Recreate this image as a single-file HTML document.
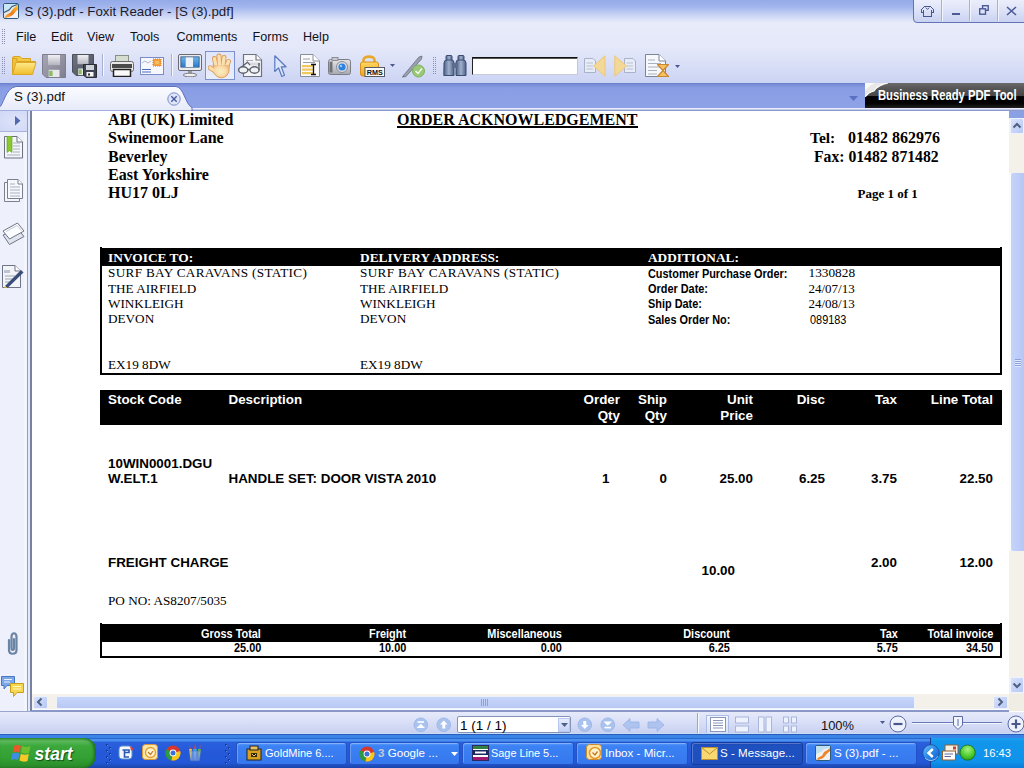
<!DOCTYPE html>
<html><head><meta charset="utf-8">
<style>
*{margin:0;padding:0;box-sizing:border-box}
html,body{width:1024px;height:768px;overflow:hidden;background:#fff}
body{position:relative;font-family:"Liberation Sans",sans-serif}
svg{display:block}
</style></head><body>
<div style="position:absolute;left:0px;top:0px;width:1024px;height:23px;background:linear-gradient(#93aae9 0px,#a2b6ed 7px,#c4d0f4 14px,#e2e7f9 21px,#e8ebfa 23px)"></div>
<div style="position:absolute;left:0px;top:23px;width:1024px;height:25px;background:linear-gradient(#e8ebfa,#e4e8f9)"></div>
<div style="position:absolute;left:0px;top:48px;width:1024px;height:35px;background:linear-gradient(#e4e8f9,#ccd4f4)"></div>
<div style="position:absolute;left:0px;top:83px;width:1024px;height:25px;background:linear-gradient(#6a7fcc 0px,#7b90d8 2px,#889de3 5px,#8ea3e7 25px)"></div>
<div style="position:absolute;left:0px;top:108px;width:1024px;height:3px;background:linear-gradient(#e9ecfa 0px,#e9ecfa 1px,#c3cbea 1px,#c3cbea 2px,#8d9ad0 2px)"></div>
<svg style="position:absolute;left:3px;top:3px;" width="16" height="16" viewBox="0 0 16 16"><defs><linearGradient id="fxo" x1="0" y1="1" x2="1" y2="0"><stop offset="0" stop-color="#f6b04a"/><stop offset="0.45" stop-color="#ee7a1a"/><stop offset="1" stop-color="#ffc830"/></linearGradient></defs>
<rect x="0.5" y="0.5" width="15" height="15" rx="1.5" fill="#e4e6e8" stroke="#2f5a7a"/>
<path d="M1 1 H14 L9 3.5 L6 7 L1 9.5 Z" fill="#c8e6f4"/>
<path d="M1 9.5 L6 7 L9 3.5 L14.5 1.5" fill="none" stroke="#2f5a7a" stroke-width="1.1"/>
<path d="M1.5 15 C2.5 11.5 5.5 11 7.5 9.5 C9 8 10 5 15 2 V6.5 C12.5 8 11.5 10.5 10 12 C8.5 13.5 6 14.5 3.5 15 Z" fill="url(#fxo)"/>
<path d="M3 15 C5 14 8 13.5 10 12 C11.5 10.5 13 8.5 15 7 V15 Z" fill="#f2f2f2"/></svg>
<div style="position:absolute;top:5.00px;font-family:'Liberation Sans',sans-serif;font-weight:normal;font-size:13.3px;line-height:13.3px;color:#1b1b2a;white-space:nowrap;left:24.5px;">S (3).pdf - Foxit Reader - [S (3).pdf]</div>
<div style="position:absolute;left:913px;top:-2px;width:113px;height:25px;border:1px solid #6474b4;border-radius:0 0 0 4px;background:linear-gradient(#eceffb 0px,#dfe4f8 10px,#c9d2f2 23px)"></div>
<div style="position:absolute;left:941px;top:0px;width:1px;height:21px;background:#a8b2d8"></div>
<div style="position:absolute;left:942px;top:0px;width:1px;height:21px;background:#f2f4fc"></div>
<div style="position:absolute;left:969px;top:0px;width:1px;height:21px;background:#a8b2d8"></div>
<div style="position:absolute;left:970px;top:0px;width:1px;height:21px;background:#f2f4fc"></div>
<div style="position:absolute;left:997px;top:0px;width:1px;height:21px;background:#a8b2d8"></div>
<div style="position:absolute;left:998px;top:0px;width:1px;height:21px;background:#f2f4fc"></div>
<svg style="position:absolute;left:920px;top:5px;" width="16" height="13" viewBox="0 0 16 13"><g fill="none" stroke="#4a5690" stroke-width="1.1" shape-rendering="crispEdges"><path d="M4.5 1.5 H10.5 L13.5 4.5 V7.5 H11.5 V11.5 H3.5 V7.5 H1.5 V4.5 Z"/><path d="M3.5 4.5 V7.5 M11.5 4.5 V7.5"/></g><path d="M5.8 2.6 L7.5 4.4 L9.2 2.6" fill="none" stroke="#4a5690" stroke-width="1"/></svg>
<div style="position:absolute;left:952px;top:13px;width:8px;height:2px;background:#4c5a96"></div>
<svg style="position:absolute;left:979px;top:5px;" width="10" height="10" viewBox="0 0 10 10"><rect x="3.6" y="0.7" width="5.6" height="4.6" fill="none" stroke="#4c5a96" stroke-width="1.4"/><rect x="0.7" y="3.8" width="5.8" height="5.4" fill="#dde2f7" stroke="#4c5a96" stroke-width="1.4"/></svg>
<svg style="position:absolute;left:1006px;top:6px;" width="11" height="10" viewBox="0 0 11 10"><path d="M1 1 L10 9 M10 1 L1 9" stroke="#4c5a96" stroke-width="1.6"/></svg>
<div style="position:absolute;left:2px;top:29px;width:1px;height:1px;background:#8c90b0"></div>
<div style="position:absolute;left:4px;top:29px;width:1px;height:1px;background:#8c90b0"></div>
<div style="position:absolute;left:2px;top:31px;width:1px;height:1px;background:#8c90b0"></div>
<div style="position:absolute;left:4px;top:31px;width:1px;height:1px;background:#8c90b0"></div>
<div style="position:absolute;left:2px;top:33px;width:1px;height:1px;background:#8c90b0"></div>
<div style="position:absolute;left:4px;top:33px;width:1px;height:1px;background:#8c90b0"></div>
<div style="position:absolute;left:2px;top:35px;width:1px;height:1px;background:#8c90b0"></div>
<div style="position:absolute;left:4px;top:35px;width:1px;height:1px;background:#8c90b0"></div>
<div style="position:absolute;left:2px;top:37px;width:1px;height:1px;background:#8c90b0"></div>
<div style="position:absolute;left:4px;top:37px;width:1px;height:1px;background:#8c90b0"></div>
<div style="position:absolute;left:2px;top:39px;width:1px;height:1px;background:#8c90b0"></div>
<div style="position:absolute;left:4px;top:39px;width:1px;height:1px;background:#8c90b0"></div>
<div style="position:absolute;left:2px;top:41px;width:1px;height:1px;background:#8c90b0"></div>
<div style="position:absolute;left:4px;top:41px;width:1px;height:1px;background:#8c90b0"></div>
<div style="position:absolute;left:2px;top:43px;width:1px;height:1px;background:#8c90b0"></div>
<div style="position:absolute;left:4px;top:43px;width:1px;height:1px;background:#8c90b0"></div>
<div style="position:absolute;top:31.00px;font-family:'Liberation Sans',sans-serif;font-weight:normal;font-size:12.6px;line-height:12.6px;color:#101018;white-space:nowrap;left:16px;">File</div>
<div style="position:absolute;top:31.00px;font-family:'Liberation Sans',sans-serif;font-weight:normal;font-size:12.6px;line-height:12.6px;color:#101018;white-space:nowrap;left:51px;">Edit</div>
<div style="position:absolute;top:31.00px;font-family:'Liberation Sans',sans-serif;font-weight:normal;font-size:12.6px;line-height:12.6px;color:#101018;white-space:nowrap;left:87px;">View</div>
<div style="position:absolute;top:31.00px;font-family:'Liberation Sans',sans-serif;font-weight:normal;font-size:12.6px;line-height:12.6px;color:#101018;white-space:nowrap;left:130px;">Tools</div>
<div style="position:absolute;top:31.00px;font-family:'Liberation Sans',sans-serif;font-weight:normal;font-size:12.6px;line-height:12.6px;color:#101018;white-space:nowrap;left:176.5px;">Comments</div>
<div style="position:absolute;top:31.00px;font-family:'Liberation Sans',sans-serif;font-weight:normal;font-size:12.6px;line-height:12.6px;color:#101018;white-space:nowrap;left:252.5px;">Forms</div>
<div style="position:absolute;top:31.00px;font-family:'Liberation Sans',sans-serif;font-weight:normal;font-size:12.6px;line-height:12.6px;color:#101018;white-space:nowrap;left:303px;">Help</div>
<div style="position:absolute;left:2px;top:57px;width:1px;height:1px;background:#8c90b0"></div>
<div style="position:absolute;left:4px;top:57px;width:1px;height:1px;background:#8c90b0"></div>
<div style="position:absolute;left:2px;top:59px;width:1px;height:1px;background:#8c90b0"></div>
<div style="position:absolute;left:4px;top:59px;width:1px;height:1px;background:#8c90b0"></div>
<div style="position:absolute;left:2px;top:61px;width:1px;height:1px;background:#8c90b0"></div>
<div style="position:absolute;left:4px;top:61px;width:1px;height:1px;background:#8c90b0"></div>
<div style="position:absolute;left:2px;top:63px;width:1px;height:1px;background:#8c90b0"></div>
<div style="position:absolute;left:4px;top:63px;width:1px;height:1px;background:#8c90b0"></div>
<div style="position:absolute;left:2px;top:65px;width:1px;height:1px;background:#8c90b0"></div>
<div style="position:absolute;left:4px;top:65px;width:1px;height:1px;background:#8c90b0"></div>
<div style="position:absolute;left:2px;top:67px;width:1px;height:1px;background:#8c90b0"></div>
<div style="position:absolute;left:4px;top:67px;width:1px;height:1px;background:#8c90b0"></div>
<div style="position:absolute;left:2px;top:69px;width:1px;height:1px;background:#8c90b0"></div>
<div style="position:absolute;left:4px;top:69px;width:1px;height:1px;background:#8c90b0"></div>
<div style="position:absolute;left:2px;top:71px;width:1px;height:1px;background:#8c90b0"></div>
<div style="position:absolute;left:4px;top:71px;width:1px;height:1px;background:#8c90b0"></div>
<div style="position:absolute;left:2px;top:73px;width:1px;height:1px;background:#8c90b0"></div>
<div style="position:absolute;left:4px;top:73px;width:1px;height:1px;background:#8c90b0"></div>
<svg style="position:absolute;left:12px;top:56px;" width="25" height="20" viewBox="0 0 25 20"><defs><linearGradient id="fd1" x1="0" y1="0" x2="0" y2="1"><stop offset="0" stop-color="#fde98a"/><stop offset="1" stop-color="#f0bd2a"/></linearGradient></defs>
<path d="M0.5 2 Q0.5 0.5 2 0.5 H8 L10 2.5 H18.5 V6 H0.5 Z" fill="#f4c842" stroke="#d9a526"/>
<path d="M0.5 18.5 V2.5 H5 L5 5.5 H23.5 L20 18.5 Z" fill="#efc03a" stroke="#d7a424"/>
<path d="M4 6.5 H24 L20.5 18.5 H0.5 Z" fill="url(#fd1)" stroke="#dca82a"/></svg>
<svg style="position:absolute;left:42px;top:54px;" width="24" height="24" viewBox="0 0 24 24"><defs><linearGradient id="fl42" x1="0" y1="0" x2="1" y2="1"><stop offset="0" stop-color="#a8a8b6"/><stop offset="1" stop-color="#7e7e8e"/></linearGradient>
<linearGradient id="fl42l" x1="0" y1="0" x2="0" y2="1"><stop offset="0" stop-color="#f0f0f4"/><stop offset="1" stop-color="#b4b4be"/></linearGradient></defs>
<path d="M0.5 0.5 H23.5 V23.5 H4 L0.5 20 Z" fill="url(#fl42)" stroke="#7e7e8e"/>
<rect x="6.0" y="1" width="12.0" height="10.1" fill="url(#fl42l)"/>
<rect x="6.7" y="15.8" width="10.8" height="7.2" fill="#e8e8ec"/>
<rect x="7.2" y="16.8" width="3.4" height="5.3" fill="#8cbc60"/></svg>
<svg style="position:absolute;left:72px;top:54px;" width="22" height="22" viewBox="0 0 22 22"><defs><linearGradient id="fl72" x1="0" y1="0" x2="1" y2="1"><stop offset="0" stop-color="#707480"/><stop offset="1" stop-color="#4c505c"/></linearGradient>
<linearGradient id="fl72l" x1="0" y1="0" x2="0" y2="1"><stop offset="0" stop-color="#f0f0f4"/><stop offset="1" stop-color="#b4b4be"/></linearGradient></defs>
<path d="M0.5 0.5 H21.5 V21.5 H4 L0.5 18 Z" fill="url(#fl72)" stroke="#4c505c"/>
<rect x="5.5" y="1" width="11.0" height="9.2" fill="url(#fl72l)"/>
<rect x="6.2" y="14.5" width="9.9" height="6.6" fill="#e8e8ec"/>
<rect x="6.6" y="15.4" width="3.1" height="4.8" fill="#8cbc60"/></svg>
<svg style="position:absolute;left:83px;top:64px;" width="14" height="14" viewBox="0 0 14 14"><path d="M0.5 0.5 H13.5 V13.5 H3 L0.5 11 Z" fill="#404450" stroke="#2a2c34"/><rect x="3" y="1" width="8" height="5" fill="#d0d3da"/><rect x="3.5" y="8" width="7" height="4.5" fill="#f4f4f4"/><rect x="5" y="9.5" width="2" height="2" fill="#333"/></svg>
<div style="position:absolute;left:102px;top:54px;width:1px;height:22px;background:#a8b0d0"></div>
<div style="position:absolute;left:103px;top:54px;width:1px;height:22px;background:#f6f8fe"></div>
<div style="position:absolute;left:171px;top:54px;width:1px;height:22px;background:#a8b0d0"></div>
<div style="position:absolute;left:172px;top:54px;width:1px;height:22px;background:#f6f8fe"></div>
<svg style="position:absolute;left:110px;top:55px;" width="24" height="22" viewBox="0 0 24 22"><rect x="5.5" y="0.5" width="13" height="8" fill="#d7dcd0" stroke="#8a8e88"/>
<rect x="0.5" y="6.5" width="23" height="10" rx="2" fill="#e8e8e8" stroke="#6a6a6a"/>
<rect x="2" y="9" width="20" height="4" fill="#4a4a4a"/>
<rect x="3.5" y="14.5" width="17" height="7" fill="#fafafa" stroke="#222" stroke-width="1.5"/></svg>
<svg style="position:absolute;left:140px;top:57px;" width="24" height="18" viewBox="0 0 24 18"><rect x="0.5" y="0.5" width="23" height="17" fill="#f6f8fe" stroke="#7a8cc8"/>
<rect x="13" y="2" width="8" height="7" fill="#f8a040" stroke="#d08030" stroke-dasharray="1 1"/>
<rect x="15" y="4" width="4" height="3" fill="#f0c060"/>
<path d="M2 6 L5 4 L8 6 L11 4" fill="none" stroke="#9aa4c8" stroke-width="0.8"/>
<path d="M2 12.5 H11 M2 15 H11" stroke="#4a6ac0" stroke-width="1.2"/></svg>
<svg style="position:absolute;left:178px;top:54px;" width="24" height="23" viewBox="0 0 24 23"><defs><linearGradient id="scr" x1="0" y1="0" x2="0" y2="1"><stop offset="0" stop-color="#6cb4ec"/><stop offset="1" stop-color="#2c78c8"/></linearGradient></defs>
<rect x="0.5" y="0.5" width="23" height="16" rx="1.5" fill="#ececee" stroke="#6a6a70"/>
<rect x="2.5" y="2.5" width="19" height="11" fill="#0e3a70"/>
<rect x="3.2" y="3.2" width="4.3" height="9.8" fill="url(#scr)"/>
<rect x="7.5" y="3.2" width="7.5" height="9.8" fill="#eef2f6"/>
<rect x="15" y="3.2" width="5.8" height="9.8" fill="url(#scr)"/>
<rect x="10" y="17" width="4" height="2.5" fill="#9a9aa0"/>
<ellipse cx="12" cy="21" rx="6.8" ry="1.8" fill="#f0f0f2" stroke="#7a7a80"/></svg>
<div style="position:absolute;left:205px;top:51px;width:30px;height:29px;border:1px solid #7c92d0;background:linear-gradient(#dfe6fb,#e9eefc)"></div>
<svg style="position:absolute;left:208px;top:53px;" width="24" height="26" viewBox="0 0 24 26"><defs><radialGradient id="hnd" cx="0.45" cy="0.5" r="0.6"><stop offset="0" stop-color="#f8f0c0"/><stop offset="0.6" stop-color="#fadcaa"/><stop offset="1" stop-color="#f0b880"/></radialGradient></defs><line x1="8" y1="13" x2="6.5" y2="5.5" stroke="#dc9c5c" stroke-width="5" stroke-linecap="round"/><line x1="11.5" y1="12" x2="11" y2="3" stroke="#dc9c5c" stroke-width="5" stroke-linecap="round"/><line x1="15" y1="12" x2="16" y2="4.5" stroke="#dc9c5c" stroke-width="5" stroke-linecap="round"/><line x1="18.5" y1="13" x2="20.5" y2="8.5" stroke="#dc9c5c" stroke-width="5" stroke-linecap="round"/><line x1="8" y1="18.5" x2="2.2" y2="14.8" stroke="#dc9c5c" stroke-width="5" stroke-linecap="round"/><path d="M5.5 12 L21 12 L20.5 19 Q18 24.5 13.5 24.5 Q9.5 24.5 6 19.5 Z" fill="#dc9c5c" stroke="#dc9c5c" stroke-width="1.6"/><line x1="8" y1="13" x2="6.5" y2="5.5" stroke="#fbe0b0" stroke-width="3.2" stroke-linecap="round"/><line x1="11.5" y1="12" x2="11" y2="3" stroke="#fbe0b0" stroke-width="3.2" stroke-linecap="round"/><line x1="15" y1="12" x2="16" y2="4.5" stroke="#fbe0b0" stroke-width="3.2" stroke-linecap="round"/><line x1="18.5" y1="13" x2="20.5" y2="8.5" stroke="#fbe0b0" stroke-width="3.2" stroke-linecap="round"/><line x1="8" y1="18.5" x2="2.2" y2="14.8" stroke="#fbe0b0" stroke-width="3.2" stroke-linecap="round"/><path d="M5.5 12 L21 12 L20.5 19 Q18 24.5 13.5 24.5 Q9.5 24.5 6 19.5 Z" fill="url(#hnd)"/></svg>
<svg style="position:absolute;left:236px;top:52px;" width="28" height="28" viewBox="0 0 28 28"><path d="M7.5 2.5 H20 L25.5 8 V24.5 H7.5 Z" fill="#f4f5f8" stroke="#6e727c" stroke-width="1.2"/>
<path d="M20 2.5 V8 H25.5" fill="#fff" stroke="#6e727c" stroke-width="1.1"/>
<path d="M10 8.5 H17" stroke="#a8acb4"/>
<rect x="13" y="10.5" width="11" height="3" fill="#d8dadf"/>
<path d="M2.5 17.5 L11.5 10.2 L14 13.2" fill="none" stroke="#5e626c" stroke-width="1.2"/>
<path d="M23 11 V14" stroke="#5e626c" stroke-width="1.6"/>
<ellipse cx="7.2" cy="18" rx="4.6" ry="3.2" fill="#eef2f4" stroke="#5e626c" stroke-width="1.4"/>
<ellipse cx="18.5" cy="18" rx="4.6" ry="3.2" fill="#eef2f4" stroke="#5e626c" stroke-width="1.4"/>
<path d="M11.8 17.5 H13.9 M23 14 V18" stroke="#5e626c" stroke-width="1.3"/></svg>
<svg style="position:absolute;left:274px;top:55px;" width="13" height="23" viewBox="0 0 13 23"><path d="M0.8 0.8 V16.5 L4.5 12.8 L7.8 21.5 L10.5 20.3 L7.3 11.8 H12 Z" fill="#dce6fa" stroke="#5a78c0" stroke-width="1.2" stroke-linejoin="round"/></svg>
<svg style="position:absolute;left:300px;top:54px;" width="20" height="23" viewBox="0 0 20 23"><path d="M0.5 0.5 H13 L19.5 7 V22.5 H0.5 Z" fill="#fbfbfd" stroke="#8a8e96"/>
<path d="M13 0.5 V7 H19.5" fill="#fff" stroke="#8a8e96"/>
<path d="M3 5 H10 M3 8.5 H15" stroke="#9aa0aa"/>
<rect x="2" y="11" width="11" height="2.2" fill="#f0c860"/><rect x="2" y="14.5" width="11" height="2.2" fill="#f0c860"/><rect x="2" y="18" width="11" height="2.2" fill="#f0c860"/>
<path d="M11 10.5 H16 M13.5 10.5 V20.5 M11 20.5 H16" stroke="#111" stroke-width="1.3"/></svg>
<svg style="position:absolute;left:328px;top:57px;" width="23" height="18" viewBox="0 0 23 18"><defs><linearGradient id="cam" x1="0" y1="0" x2="0" y2="1"><stop offset="0" stop-color="#e4e4e8"/><stop offset="1" stop-color="#a8a8b0"/></linearGradient></defs>
<rect x="0.5" y="2.5" width="22" height="15" rx="2" fill="url(#cam)" stroke="#7c7c84"/>
<rect x="4" y="0.5" width="6" height="3" fill="#c8c8ce" stroke="#7c7c84" stroke-width="0.8"/>
<rect x="1.5" y="4.5" width="3" height="11" fill="#707078"/>
<circle cx="14" cy="10" r="5.5" fill="#d8dce4" stroke="#8a8e96"/>
<circle cx="14" cy="10" r="3.6" fill="#2d82e0"/><circle cx="13" cy="9" r="1.2" fill="#9ccaf8"/></svg>
<svg style="position:absolute;left:360px;top:54px;" width="25" height="23" viewBox="0 0 25 23"><defs><linearGradient id="lk" x1="0" y1="0" x2="0" y2="1"><stop offset="0" stop-color="#ffd860"/><stop offset="1" stop-color="#f0a020"/></linearGradient></defs>
<path d="M3.5 9 V6 C3.5 1.5 14.5 1.5 14.5 6 V9" fill="none" stroke="#e8a828" stroke-width="2.6"/>
<rect x="0.5" y="8" width="18" height="14" rx="2" fill="url(#lk)" stroke="#d89020"/>
<rect x="5" y="13.5" width="19.5" height="9" fill="#fbfbfb" stroke="#555a66"/>
<text x="14.7" y="21" font-family="Liberation Sans" font-size="8" font-weight="bold" text-anchor="middle" fill="#111" textLength="16" lengthAdjust="spacingAndGlyphs">RMS</text></svg>
<svg style="position:absolute;left:390px;top:64px;" width="5" height="3" viewBox="0 0 5 3"><path d="M0 0 H5 L2.5 3 Z" fill="#4a5890"/></svg>
<svg style="position:absolute;left:401px;top:54px;" width="25" height="24" viewBox="0 0 25 24"><path d="M2 22 L18 3 L21 2 L20.5 5 L4.5 23 Z" fill="#9aa0ae" stroke="#6a7080" stroke-width="0.8"/>
<path d="M2 22 L1 23.5 L3 23 Z" fill="#333"/>
<circle cx="17.5" cy="17" r="6" fill="#98c878" stroke="#80b060"/>
<path d="M14.5 17 L17 19.5 L21 14.5" fill="none" stroke="#f4faf0" stroke-width="1.5"/></svg>
<div style="position:absolute;left:433px;top:57px;width:1px;height:1px;background:#8c90b0"></div>
<div style="position:absolute;left:435px;top:57px;width:1px;height:1px;background:#8c90b0"></div>
<div style="position:absolute;left:433px;top:59px;width:1px;height:1px;background:#8c90b0"></div>
<div style="position:absolute;left:435px;top:59px;width:1px;height:1px;background:#8c90b0"></div>
<div style="position:absolute;left:433px;top:61px;width:1px;height:1px;background:#8c90b0"></div>
<div style="position:absolute;left:435px;top:61px;width:1px;height:1px;background:#8c90b0"></div>
<div style="position:absolute;left:433px;top:63px;width:1px;height:1px;background:#8c90b0"></div>
<div style="position:absolute;left:435px;top:63px;width:1px;height:1px;background:#8c90b0"></div>
<div style="position:absolute;left:433px;top:65px;width:1px;height:1px;background:#8c90b0"></div>
<div style="position:absolute;left:435px;top:65px;width:1px;height:1px;background:#8c90b0"></div>
<div style="position:absolute;left:433px;top:67px;width:1px;height:1px;background:#8c90b0"></div>
<div style="position:absolute;left:435px;top:67px;width:1px;height:1px;background:#8c90b0"></div>
<div style="position:absolute;left:433px;top:69px;width:1px;height:1px;background:#8c90b0"></div>
<div style="position:absolute;left:435px;top:69px;width:1px;height:1px;background:#8c90b0"></div>
<div style="position:absolute;left:433px;top:71px;width:1px;height:1px;background:#8c90b0"></div>
<div style="position:absolute;left:435px;top:71px;width:1px;height:1px;background:#8c90b0"></div>
<div style="position:absolute;left:433px;top:73px;width:1px;height:1px;background:#8c90b0"></div>
<div style="position:absolute;left:435px;top:73px;width:1px;height:1px;background:#8c90b0"></div>
<svg style="position:absolute;left:443px;top:55px;" width="24" height="21" viewBox="0 0 24 21"><defs><linearGradient id="bn" x1="0" y1="0" x2="1" y2="0"><stop offset="0" stop-color="#4e6288"/><stop offset="0.5" stop-color="#a0b0cc"/><stop offset="1" stop-color="#4e6288"/></linearGradient></defs>
<rect x="3" y="0.5" width="6" height="5" rx="1" fill="url(#bn)" stroke="#3c4c70"/>
<rect x="15" y="0.5" width="6" height="5" rx="1" fill="url(#bn)" stroke="#3c4c70"/>
<path d="M1 8 Q1 5 4 5 H9 Q11 5 11 8 V20.5 H0.8 Z" fill="url(#bn)" stroke="#3c4c70"/>
<path d="M13 8 Q13 5 15 5 H20 Q23 5 23 8 V20.5 H13 Z" fill="url(#bn)" stroke="#3c4c70"/>
<rect x="9" y="8" width="6" height="5" fill="#5a6c90"/></svg>
<div style="position:absolute;left:472px;top:57px;width:106px;height:18px;background:#fff;border-top:1px solid #111;border-left:1px solid #222;border-right:1px solid #c4c8d8;border-bottom:1px solid #c8ccdc;box-shadow:inset 0 1px 0 #555"></div>
<svg style="position:absolute;left:584px;top:55px;" width="22" height="22" viewBox="0 0 22 22"><path d="M0.5 3.5 H9 L11.5 6 V17.5 H0.5 Z" fill="#e8ecf6" stroke="#aab2c8"/><path d="M2.5 8 H9 M2.5 11 H9 M2.5 14 H9" stroke="#b8c0d6"/>
<path d="M21 0.8 V21.2 L9.5 11 Z" fill="#f4d898" stroke="#ecc878"/></svg>
<svg style="position:absolute;left:614px;top:55px;" width="22" height="22" viewBox="0 0 22 22"><path d="M10.5 3.5 H19 L21.5 6 V17.5 H10.5 Z" fill="#e8ecf6" stroke="#aab2c8"/><path d="M12.5 8 H19 M12.5 11 H19 M12.5 14 H19" stroke="#b8c0d6"/>
<path d="M0.8 0.8 V21.2 L12.5 11 Z" fill="#f4d898" stroke="#ecc878"/></svg>
<svg style="position:absolute;left:645px;top:54px;" width="25" height="24" viewBox="0 0 25 24"><path d="M0.5 0.5 H14 L20.5 7 V22.5 H0.5 Z" fill="#f6f8fc" stroke="#7c8498"/>
<path d="M14 0.5 V7 H20.5" fill="#fff" stroke="#7c8498"/>
<path d="M3 6 H10 M3 9.5 H16 M3 13 H16 M3 16.5 H12 M3 20 H12" stroke="#a8b0c4"/>
<path d="M12.5 10.5 H23.5 L18 16.5 L23.5 22.5 H12.5 L18 16.5 Z" fill="#f8c060" stroke="#c88830" stroke-width="1.2" stroke-linejoin="round"/></svg>
<svg style="position:absolute;left:675px;top:65px;" width="5" height="3" viewBox="0 0 5 3"><path d="M0 0 H5 L2.5 3 Z" fill="#4a5890"/></svg>
<svg style="position:absolute;left:0px;top:85px;" width="194" height="26" viewBox="0 0 194 26"><defs><linearGradient id="tab" x1="0" y1="0" x2="0" y2="1"><stop offset="0" stop-color="#fbfcff"/><stop offset="1" stop-color="#e6eaf9"/></linearGradient></defs>
<path d="M-1 22.5 C3.5 21, 5 3, 16 1.5 H176 C184 2.5, 185 19, 192 22.5 V26 H-1 Z" fill="url(#tab)" stroke="#5f72bc" stroke-width="1"/></svg>
<div style="position:absolute;top:90.00px;font-family:'Liberation Sans',sans-serif;font-weight:normal;font-size:13.3px;line-height:13.3px;color:#111;white-space:nowrap;left:14px;">S (3).pdf</div>
<svg style="position:absolute;left:167px;top:92px;" width="14" height="14" viewBox="0 0 14 14"><circle cx="7" cy="7" r="6.2" fill="#dfe5f8" stroke="#7a8cc8" stroke-width="1"/><path d="M4.3 4.3 L9.7 9.7 M9.7 4.3 L4.3 9.7" stroke="#4a5ca0" stroke-width="1.4"/></svg>
<svg style="position:absolute;left:849px;top:96px;" width="9" height="5" viewBox="0 0 9 5"><path d="M0 0 H9 L4.5 5 Z" fill="#5a70c0"/></svg>
<div style="position:absolute;left:865px;top:83px;width:159px;height:25px;background:linear-gradient(#6a6a6a 0px,#555 6px,#484848 12.5px,#050505 13px,#000 20px,#202020 25px)"></div>
<svg style="position:absolute;left:865px;top:83px;" width="24" height="14" viewBox="0 0 24 14"><path d="M0 0 H23 Q13 2 9 8 Q4 9 0 14 Z" fill="#e8e8e8"/><path d="M0 14 Q4 9 9 8 Q13 2 23 0" fill="none" stroke="#fff" stroke-width="1.2"/><path d="M0 0 H10 Q3 3 0 8 Z" fill="#fafafa"/></svg>
<div style="position:absolute;top:89.00px;font-family:'Liberation Sans',sans-serif;font-weight:bold;font-size:13.8px;line-height:13.8px;color:#fff;white-space:nowrap;left:877.5px;transform:scaleX(0.815);transform-origin:0 0;">Business Ready PDF Tool</div>
<div style="position:absolute;left:0px;top:111px;width:27px;height:600px;background:#eef0fc"></div>
<div style="position:absolute;left:0px;top:111px;width:27px;height:20px;background:radial-gradient(ellipse at 60% 50%,#dfe4fa,#cfd7f5)"></div>
<div style="position:absolute;left:24px;top:131px;width:3px;height:580px;background:#f3f5fd"></div>
<div style="position:absolute;left:0px;top:131px;width:27px;height:1px;background:#a9b2da"></div>
<div style="position:absolute;left:27px;top:111px;width:1px;height:600px;background:#959dc6"></div>
<div style="position:absolute;left:28px;top:111px;width:2px;height:600px;background:#dfe8fc"></div>
<div style="position:absolute;left:30px;top:111px;width:2px;height:600px;background:#78829f"></div>
<div style="position:absolute;left:32px;top:111px;width:977px;height:583px;background:#fff"></div>
<div style="position:absolute;top:112.00px;font-family:'Liberation Serif',serif;font-weight:bold;font-size:16px;line-height:16px;color:#000;white-space:nowrap;left:108px;">ABI (UK) Limited</div>
<div style="position:absolute;top:130.00px;font-family:'Liberation Serif',serif;font-weight:bold;font-size:16px;line-height:16px;color:#000;white-space:nowrap;left:108px;">Swinemoor Lane</div>
<div style="position:absolute;top:149.00px;font-family:'Liberation Serif',serif;font-weight:bold;font-size:16px;line-height:16px;color:#000;white-space:nowrap;left:108px;">Beverley</div>
<div style="position:absolute;top:167.00px;font-family:'Liberation Serif',serif;font-weight:bold;font-size:16px;line-height:16px;color:#000;white-space:nowrap;left:108px;">East Yorkshire</div>
<div style="position:absolute;top:185.00px;font-family:'Liberation Serif',serif;font-weight:bold;font-size:16px;line-height:16px;color:#000;white-space:nowrap;left:108px;">HU17 0LJ</div>
<div style="position:absolute;top:112.00px;font-family:'Liberation Serif',serif;font-weight:bold;font-size:16px;line-height:16px;color:#000;white-space:nowrap;left:397px;">ORDER ACKNOWLEDGEMENT</div>
<div style="position:absolute;left:397px;top:126px;width:241px;height:2px;background:#000"></div>
<div style="position:absolute;top:130.00px;font-family:'Liberation Serif',serif;font-weight:bold;font-size:15.5px;line-height:15.5px;color:#000;white-space:nowrap;left:810px;">Tel:</div>
<div style="position:absolute;top:130.00px;font-family:'Liberation Serif',serif;font-weight:bold;font-size:16px;line-height:16px;color:#000;white-space:nowrap;left:848px;">01482 862976</div>
<div style="position:absolute;top:149.00px;font-family:'Liberation Serif',serif;font-weight:bold;font-size:15.7px;line-height:15.7px;color:#000;white-space:nowrap;left:814px;">Fax: 01482 871482</div>
<div style="position:absolute;top:187.00px;font-family:'Liberation Serif',serif;font-weight:bold;font-size:13px;line-height:13px;color:#000;white-space:nowrap;left:857.5px;">Page 1 of 1</div>
<div style="position:absolute;left:100px;top:247px;width:902px;height:128px;border:2px solid #000;border-top:0"></div>
<div style="position:absolute;left:102px;top:248px;width:898px;height:18px;background:#000"></div>
<div style="position:absolute;top:251.00px;font-family:'Liberation Serif',serif;font-weight:bold;font-size:13.4px;line-height:13.4px;color:#fff;white-space:nowrap;left:108px;">INVOICE TO:</div>
<div style="position:absolute;top:251.00px;font-family:'Liberation Serif',serif;font-weight:bold;font-size:13.4px;line-height:13.4px;color:#fff;white-space:nowrap;left:360px;">DELIVERY ADDRESS:</div>
<div style="position:absolute;top:251.00px;font-family:'Liberation Serif',serif;font-weight:bold;font-size:13.3px;line-height:13.3px;color:#fff;white-space:nowrap;left:648px;">ADDITIONAL:</div>
<div style="position:absolute;top:266.00px;font-family:'Liberation Serif',serif;font-weight:normal;font-size:13.2px;line-height:13.2px;color:#000;white-space:nowrap;left:108px;letter-spacing:0.33px;">SURF BAY CARAVANS (STATIC)</div>
<div style="position:absolute;top:266.00px;font-family:'Liberation Serif',serif;font-weight:normal;font-size:13.2px;line-height:13.2px;color:#000;white-space:nowrap;left:360px;letter-spacing:0.33px;">SURF BAY CARAVANS (STATIC)</div>
<div style="position:absolute;top:282.00px;font-family:'Liberation Serif',serif;font-weight:normal;font-size:13.2px;line-height:13.2px;color:#000;white-space:nowrap;left:108px;">THE AIRFIELD</div>
<div style="position:absolute;top:282.00px;font-family:'Liberation Serif',serif;font-weight:normal;font-size:13.2px;line-height:13.2px;color:#000;white-space:nowrap;left:360px;">THE AIRFIELD</div>
<div style="position:absolute;top:297.00px;font-family:'Liberation Serif',serif;font-weight:normal;font-size:13.2px;line-height:13.2px;color:#000;white-space:nowrap;left:108px;">WINKLEIGH</div>
<div style="position:absolute;top:297.00px;font-family:'Liberation Serif',serif;font-weight:normal;font-size:13.2px;line-height:13.2px;color:#000;white-space:nowrap;left:360px;">WINKLEIGH</div>
<div style="position:absolute;top:312.00px;font-family:'Liberation Serif',serif;font-weight:normal;font-size:13.2px;line-height:13.2px;color:#000;white-space:nowrap;left:108px;">DEVON</div>
<div style="position:absolute;top:312.00px;font-family:'Liberation Serif',serif;font-weight:normal;font-size:13.2px;line-height:13.2px;color:#000;white-space:nowrap;left:360px;">DEVON</div>
<div style="position:absolute;top:358.00px;font-family:'Liberation Serif',serif;font-weight:normal;font-size:13.2px;line-height:13.2px;color:#000;white-space:nowrap;left:108px;">EX19 8DW</div>
<div style="position:absolute;top:358.00px;font-family:'Liberation Serif',serif;font-weight:normal;font-size:13.2px;line-height:13.2px;color:#000;white-space:nowrap;left:360px;">EX19 8DW</div>
<div style="position:absolute;top:267.00px;font-family:'Liberation Sans',sans-serif;font-weight:bold;font-size:13.3px;line-height:13.3px;color:#000;white-space:nowrap;left:648px;transform:scaleX(0.82);transform-origin:0 0;">Customer Purchase Order:</div>
<div style="position:absolute;top:266.00px;font-family:'Liberation Serif',serif;font-weight:normal;font-size:13.3px;line-height:13.3px;color:#000;white-space:nowrap;left:808.5px;">1330828</div>
<div style="position:absolute;top:282.00px;font-family:'Liberation Sans',sans-serif;font-weight:bold;font-size:13.3px;line-height:13.3px;color:#000;white-space:nowrap;left:648px;transform:scaleX(0.82);transform-origin:0 0;">Order Date:</div>
<div style="position:absolute;top:282.00px;font-family:'Liberation Serif',serif;font-weight:normal;font-size:13px;line-height:13px;color:#000;white-space:nowrap;left:808.5px;">24/07/13</div>
<div style="position:absolute;top:297.00px;font-family:'Liberation Sans',sans-serif;font-weight:bold;font-size:13.3px;line-height:13.3px;color:#000;white-space:nowrap;left:648px;transform:scaleX(0.82);transform-origin:0 0;">Ship Date:</div>
<div style="position:absolute;top:297.00px;font-family:'Liberation Serif',serif;font-weight:normal;font-size:13px;line-height:13px;color:#000;white-space:nowrap;left:808.5px;">24/08/13</div>
<div style="position:absolute;top:313.00px;font-family:'Liberation Sans',sans-serif;font-weight:bold;font-size:13.3px;line-height:13.3px;color:#000;white-space:nowrap;left:648px;transform:scaleX(0.82);transform-origin:0 0;">Sales Order No:</div>
<div style="position:absolute;top:313.00px;font-family:'Liberation Sans',sans-serif;font-weight:normal;font-size:13.3px;line-height:13.3px;color:#000;white-space:nowrap;left:809.5px;transform:scaleX(0.82);transform-origin:0 0;">089183</div>
<div style="position:absolute;left:100px;top:390px;width:902px;height:35px;background:#000"></div>
<div style="position:absolute;top:393.00px;font-family:'Liberation Sans',sans-serif;font-weight:bold;font-size:13.4px;line-height:13.4px;color:#fff;white-space:nowrap;left:108px;">Stock Code</div>
<div style="position:absolute;top:393.00px;font-family:'Liberation Sans',sans-serif;font-weight:bold;font-size:13.4px;line-height:13.4px;color:#fff;white-space:nowrap;left:228.5px;">Description</div>
<div style="position:absolute;top:393.00px;font-family:'Liberation Sans',sans-serif;font-weight:bold;font-size:13.4px;line-height:13.4px;color:#fff;white-space:nowrap;right:404px;">Order</div>
<div style="position:absolute;top:409.00px;font-family:'Liberation Sans',sans-serif;font-weight:bold;font-size:13.4px;line-height:13.4px;color:#fff;white-space:nowrap;right:404px;">Qty</div>
<div style="position:absolute;top:393.00px;font-family:'Liberation Sans',sans-serif;font-weight:bold;font-size:13.4px;line-height:13.4px;color:#fff;white-space:nowrap;right:357px;">Ship</div>
<div style="position:absolute;top:409.00px;font-family:'Liberation Sans',sans-serif;font-weight:bold;font-size:13.4px;line-height:13.4px;color:#fff;white-space:nowrap;right:357px;">Qty</div>
<div style="position:absolute;top:393.00px;font-family:'Liberation Sans',sans-serif;font-weight:bold;font-size:13.4px;line-height:13.4px;color:#fff;white-space:nowrap;right:271px;">Unit</div>
<div style="position:absolute;top:409.00px;font-family:'Liberation Sans',sans-serif;font-weight:bold;font-size:13.4px;line-height:13.4px;color:#fff;white-space:nowrap;right:271px;">Price</div>
<div style="position:absolute;top:393.00px;font-family:'Liberation Sans',sans-serif;font-weight:bold;font-size:13.4px;line-height:13.4px;color:#fff;white-space:nowrap;right:199px;">Disc</div>
<div style="position:absolute;top:393.00px;font-family:'Liberation Sans',sans-serif;font-weight:bold;font-size:13.4px;line-height:13.4px;color:#fff;white-space:nowrap;right:127px;">Tax</div>
<div style="position:absolute;top:393.00px;font-family:'Liberation Sans',sans-serif;font-weight:bold;font-size:13.4px;line-height:13.4px;color:#fff;white-space:nowrap;right:31px;">Line Total</div>
<div style="position:absolute;top:457.00px;font-family:'Liberation Sans',sans-serif;font-weight:bold;font-size:13.4px;line-height:13.4px;color:#000;white-space:nowrap;left:108px;">10WIN0001.DGU</div>
<div style="position:absolute;top:472.00px;font-family:'Liberation Sans',sans-serif;font-weight:bold;font-size:13.4px;line-height:13.4px;color:#000;white-space:nowrap;left:108px;">W.ELT.1</div>
<div style="position:absolute;top:472.00px;font-family:'Liberation Sans',sans-serif;font-weight:bold;font-size:13.4px;line-height:13.4px;color:#000;white-space:nowrap;left:228.5px;">HANDLE SET: DOOR VISTA 2010</div>
<div style="position:absolute;top:472.00px;font-family:'Liberation Sans',sans-serif;font-weight:bold;font-size:13.4px;line-height:13.4px;color:#000;white-space:nowrap;right:414.5px;">1</div>
<div style="position:absolute;top:472.00px;font-family:'Liberation Sans',sans-serif;font-weight:bold;font-size:13.4px;line-height:13.4px;color:#000;white-space:nowrap;right:357px;">0</div>
<div style="position:absolute;top:472.00px;font-family:'Liberation Sans',sans-serif;font-weight:bold;font-size:13.4px;line-height:13.4px;color:#000;white-space:nowrap;right:271px;">25.00</div>
<div style="position:absolute;top:472.00px;font-family:'Liberation Sans',sans-serif;font-weight:bold;font-size:13.4px;line-height:13.4px;color:#000;white-space:nowrap;right:199px;">6.25</div>
<div style="position:absolute;top:472.00px;font-family:'Liberation Sans',sans-serif;font-weight:bold;font-size:13.4px;line-height:13.4px;color:#000;white-space:nowrap;right:127px;">3.75</div>
<div style="position:absolute;top:472.00px;font-family:'Liberation Sans',sans-serif;font-weight:bold;font-size:13.4px;line-height:13.4px;color:#000;white-space:nowrap;right:31px;">22.50</div>
<div style="position:absolute;top:556.00px;font-family:'Liberation Sans',sans-serif;font-weight:bold;font-size:13.4px;line-height:13.4px;color:#000;white-space:nowrap;left:108px;">FREIGHT CHARGE</div>
<div style="position:absolute;top:564.00px;font-family:'Liberation Sans',sans-serif;font-weight:bold;font-size:13.4px;line-height:13.4px;color:#000;white-space:nowrap;right:289px;">10.00</div>
<div style="position:absolute;top:556.00px;font-family:'Liberation Sans',sans-serif;font-weight:bold;font-size:13.4px;line-height:13.4px;color:#000;white-space:nowrap;right:127px;">2.00</div>
<div style="position:absolute;top:556.00px;font-family:'Liberation Sans',sans-serif;font-weight:bold;font-size:13.4px;line-height:13.4px;color:#000;white-space:nowrap;right:31px;">12.00</div>
<div style="position:absolute;top:594.00px;font-family:'Liberation Serif',serif;font-weight:normal;font-size:13.2px;line-height:13.2px;color:#000;white-space:nowrap;left:108px;">PO NO: AS8207/5035</div>
<div style="position:absolute;left:100px;top:623px;width:902px;height:35px;border:2px solid #000;border-top:0"></div>
<div style="position:absolute;left:102px;top:624px;width:898px;height:18px;background:#000"></div>
<div style="position:absolute;top:627.00px;font-family:'Liberation Sans',sans-serif;font-weight:bold;font-size:13.3px;line-height:13.3px;color:#fff;white-space:nowrap;right:763px;transform:scaleX(0.82);transform-origin:100% 0;">Gross Total</div>
<div style="position:absolute;top:627.00px;font-family:'Liberation Sans',sans-serif;font-weight:bold;font-size:13.3px;line-height:13.3px;color:#fff;white-space:nowrap;right:618px;transform:scaleX(0.82);transform-origin:100% 0;">Freight</div>
<div style="position:absolute;top:627.00px;font-family:'Liberation Sans',sans-serif;font-weight:bold;font-size:13.3px;line-height:13.3px;color:#fff;white-space:nowrap;right:462.5px;transform:scaleX(0.82);transform-origin:100% 0;">Miscellaneous</div>
<div style="position:absolute;top:627.00px;font-family:'Liberation Sans',sans-serif;font-weight:bold;font-size:13.3px;line-height:13.3px;color:#fff;white-space:nowrap;right:294.5px;transform:scaleX(0.82);transform-origin:100% 0;">Discount</div>
<div style="position:absolute;top:627.00px;font-family:'Liberation Sans',sans-serif;font-weight:bold;font-size:13.3px;line-height:13.3px;color:#fff;white-space:nowrap;right:126.5px;transform:scaleX(0.82);transform-origin:100% 0;">Tax</div>
<div style="position:absolute;top:627.00px;font-family:'Liberation Sans',sans-serif;font-weight:bold;font-size:13.3px;line-height:13.3px;color:#fff;white-space:nowrap;right:30.5px;transform:scaleX(0.82);transform-origin:100% 0;">Total invoice</div>
<div style="position:absolute;top:641.00px;font-family:'Liberation Sans',sans-serif;font-weight:bold;font-size:13.3px;line-height:13.3px;color:#000;white-space:nowrap;right:763px;transform:scaleX(0.82);transform-origin:100% 0;">25.00</div>
<div style="position:absolute;top:641.00px;font-family:'Liberation Sans',sans-serif;font-weight:bold;font-size:13.3px;line-height:13.3px;color:#000;white-space:nowrap;right:618px;transform:scaleX(0.82);transform-origin:100% 0;">10.00</div>
<div style="position:absolute;top:641.00px;font-family:'Liberation Sans',sans-serif;font-weight:bold;font-size:13.3px;line-height:13.3px;color:#000;white-space:nowrap;right:462.5px;transform:scaleX(0.82);transform-origin:100% 0;">0.00</div>
<div style="position:absolute;top:641.00px;font-family:'Liberation Sans',sans-serif;font-weight:bold;font-size:13.3px;line-height:13.3px;color:#000;white-space:nowrap;right:294.5px;transform:scaleX(0.82);transform-origin:100% 0;">6.25</div>
<div style="position:absolute;top:641.00px;font-family:'Liberation Sans',sans-serif;font-weight:bold;font-size:13.3px;line-height:13.3px;color:#000;white-space:nowrap;right:126.5px;transform:scaleX(0.82);transform-origin:100% 0;">5.75</div>
<div style="position:absolute;top:641.00px;font-family:'Liberation Sans',sans-serif;font-weight:bold;font-size:13.3px;line-height:13.3px;color:#000;white-space:nowrap;right:30.5px;transform:scaleX(0.82);transform-origin:100% 0;">34.50</div>
<svg style="position:absolute;left:15px;top:116px;" width="6" height="10" viewBox="0 0 6 10"><path d="M0 0 L5.5 4.8 L0 9.5 Z" fill="#5468b0"/></svg>
<svg style="position:absolute;left:4px;top:136px;" width="20" height="23" viewBox="0 0 20 23"><path d="M0.5 0.5 H13 L18.5 6 V22 H0.5 Z" fill="#f4f6fa" stroke="#6c7080"/>
<path d="M13 0.5 V6 H18.5" fill="#fff" stroke="#6c7080"/>
<path d="M9 7 H16 M9 10 H16 M9 13 H16 M9 16 H16 M3 19 H16" stroke="#aab0bc"/>
<path d="M3 0 H8 V16.5 L5.5 14.5 L3 16.5 Z" fill="#8cc830" stroke="#5e9a1a" stroke-width="0.6"/></svg>
<svg style="position:absolute;left:4px;top:179px;" width="20" height="23" viewBox="0 0 20 23"><path d="M0.5 3.5 H11 L15.5 8 V22.5 H0.5 Z" fill="#f4f6fa" stroke="#7a8090"/>
<path d="M3.5 0.5 H14 L18.5 5 V19.5 H3.5 Z" fill="#f6f8fb" stroke="#7a8090"/>
<path d="M14 0.5 V5 H18.5" fill="#fff" stroke="#7a8090"/>
<path d="M6 5 H11 M6 8 H16 M6 11 H16 M6 14 H16 M6 17 H16" stroke="#a8b0c4"/></svg>
<svg style="position:absolute;left:2px;top:221px;" width="23" height="25" viewBox="0 0 23 25"><path d="M1 14 L15.5 8 L22 15.5 L7.5 23.5 Z" fill="#dfe4ee" stroke="#6e7488" stroke-linejoin="round"/>
<path d="M1 10 L15.5 2 L22 10 L7.5 18 Z" fill="#fbfcfd" stroke="#6e7488" stroke-linejoin="round"/>
<path d="M4 10.5 L15 4.5 L19.5 9.5" fill="none" stroke="#c8ccd8"/></svg>
<svg style="position:absolute;left:1px;top:265px;" width="23" height="23" viewBox="0 0 23 23"><path d="M1.5 0.5 H14 L19.5 6 V22.5 H1.5 Z" fill="#f2f4f8" stroke="#6e7488"/>
<path d="M14 0.5 V6 H19.5" fill="#fff" stroke="#6e7488"/>
<path d="M4 5 V8 M6 5 V8 M8 5 V8 M4 11 H14 M4 14 H12 M4 17 H10" stroke="#9aa2b4" stroke-width="1.2"/>
<path d="M4 21 L20 5 L22.5 7.5 L6.5 23 Z" fill="#3a4c78"/>
<path d="M4 21 L6.5 23 L3 23.5 Z" fill="#e0b040"/></svg>
<svg style="position:absolute;left:6px;top:631px;" width="13" height="26" viewBox="0 0 13 26"><path d="M3 9 V19 C3 24 10.5 24 10.5 19 V6 C10.5 1 5.5 1 5.5 6 V17 C5.5 19.5 8 19.5 8 17 V8" fill="none" stroke="#6a84a4" stroke-width="2.2" stroke-linecap="round"/></svg>
<svg style="position:absolute;left:1px;top:676px;" width="24" height="22" viewBox="0 0 24 22"><path d="M0.5 0.5 H13.5 V9.5 H6 L3 13 V9.5 H0.5 Z" fill="#7aa8e8" stroke="#4a78c0"/>
<path d="M3 3.5 H11 M3 6 H9" stroke="#e8f0fc" stroke-width="1.2"/>
<path d="M9.5 7.5 H22.5 V16.5 H16 L12.5 20.5 V16.5 H9.5 Z" fill="#f6d850" stroke="#c8a020"/>
<path d="M12 10.5 H20 M12 13 H20" stroke="#fff6c0" stroke-width="1.2"/></svg>
<div style="position:absolute;left:1009px;top:111px;width:15px;height:583px;background:#f3f1ea"></div>
<div style="position:absolute;left:1009px;top:111px;width:15px;height:7px;background:#8aa0e4"></div>
<div style="position:absolute;left:1010px;top:118px;width:14px;height:16px;border:1px solid #eef2fc;border-radius:2px;background:linear-gradient(135deg,#d8e2fb,#b8c8f4)"></div>
<svg style="position:absolute;left:1011px;top:120px;" width="12" height="12" viewBox="0 0 12 12"><path d="M2.5 7.5 L6 4 L9.5 7.5" fill="none" stroke="#4d6185" stroke-width="2"/></svg>
<div style="position:absolute;left:1009px;top:173px;width:2px;height:378px;background:#fbfcfe"></div>
<div style="position:absolute;left:1011px;top:173px;width:14px;height:378px;border-radius:2px 0 0 2px;background:linear-gradient(90deg,#c6d4fa,#b4c6f6)"></div>
<div style="position:absolute;left:1015px;top:359px;width:6px;height:1px;background:#8c9fd6"></div>
<div style="position:absolute;left:1015px;top:360px;width:6px;height:1px;background:#e4ecfc"></div>
<div style="position:absolute;left:1015px;top:361px;width:6px;height:1px;background:#8c9fd6"></div>
<div style="position:absolute;left:1015px;top:362px;width:6px;height:1px;background:#e4ecfc"></div>
<div style="position:absolute;left:1015px;top:363px;width:6px;height:1px;background:#8c9fd6"></div>
<div style="position:absolute;left:1015px;top:364px;width:6px;height:1px;background:#e4ecfc"></div>
<div style="position:absolute;left:1015px;top:365px;width:6px;height:1px;background:#8c9fd6"></div>
<div style="position:absolute;left:1015px;top:366px;width:6px;height:1px;background:#e4ecfc"></div>
<div style="position:absolute;left:1010px;top:677px;width:14px;height:16px;border:1px solid #eef2fc;border-radius:2px;background:linear-gradient(135deg,#d8e2fb,#b8c8f4)"></div>
<svg style="position:absolute;left:1011px;top:679px;" width="12" height="12" viewBox="0 0 12 12"><path d="M2.5 4.5 L6 8 L9.5 4.5" fill="none" stroke="#4d6185" stroke-width="2"/></svg>
<div style="position:absolute;left:32px;top:694px;width:977px;height:17px;background:#f3f1ea"></div>
<div style="position:absolute;left:32px;top:709px;width:977px;height:1px;background:#fafcff"></div>
<div style="position:absolute;left:32px;top:710px;width:977px;height:2px;background:#8a98c8"></div>
<div style="position:absolute;left:1009px;top:694px;width:15px;height:17px;background:#efede4"></div>
<div style="position:absolute;left:33px;top:696px;width:15px;height:13px;border:1px solid #eef2fc;border-radius:2px;background:linear-gradient(135deg,#d8e2fb,#b8c8f4)"></div>
<svg style="position:absolute;left:34px;top:696px;" width="12" height="12" viewBox="0 0 12 12"><path d="M7.5 2.5 L4 6 L7.5 9.5" fill="none" stroke="#4d6185" stroke-width="2"/></svg>
<div style="position:absolute;left:56px;top:696px;width:859px;height:13px;border:1px solid #eef2fc;border-radius:2px;background:linear-gradient(#c8d6fa,#b8c8f4)"></div>
<div style="position:absolute;left:481px;top:699px;width:1px;height:7px;background:#8ea2d8"></div>
<div style="position:absolute;left:483px;top:699px;width:1px;height:7px;background:#8ea2d8"></div>
<div style="position:absolute;left:485px;top:699px;width:1px;height:7px;background:#8ea2d8"></div>
<div style="position:absolute;left:487px;top:699px;width:1px;height:7px;background:#8ea2d8"></div>
<div style="position:absolute;left:993px;top:696px;width:15px;height:13px;border:1px solid #eef2fc;border-radius:2px;background:linear-gradient(135deg,#d8e2fb,#b8c8f4)"></div>
<svg style="position:absolute;left:994px;top:696px;" width="12" height="12" viewBox="0 0 12 12"><path d="M4.5 2.5 L8 6 L4.5 9.5" fill="none" stroke="#4d6185" stroke-width="2"/></svg>
<div style="position:absolute;left:0px;top:711px;width:28px;height:1px;background:#9aa6cf"></div>
<div style="position:absolute;left:0px;top:712px;width:1024px;height:21px;background:linear-gradient(#e6eafa,#d9dff7 10px,#c9d1f1)"></div>
<div style="position:absolute;left:0px;top:711px;width:32px;height:1px;background:#9aa6cf"></div>
<svg style="position:absolute;left:413.2px;top:717.2px;" width="15.6" height="15.6" viewBox="0 0 15.6 15.6"><circle cx="7.8" cy="7.8" r="6.8" fill="#aac2ee" stroke="#a0b8e8" stroke-width="1"/><path d="M4.5 5 H11" stroke="#fff" stroke-width="1.6"/><path d="M3.5 11 L7.8 6.8 L12 11 Z" fill="#fff"/></svg>
<svg style="position:absolute;left:435.9px;top:717.2px;" width="15.6" height="15.6" viewBox="0 0 15.6 15.6"><circle cx="7.8" cy="7.8" r="6.8" fill="#aac2ee" stroke="#a0b8e8" stroke-width="1"/><path d="M7.8 3.5 L11.5 7.5 H9.3 V11.5 H6.3 V7.5 H4 Z" fill="#fff"/></svg>
<div style="position:absolute;left:457px;top:716px;width:114px;height:17px;background:#fff;border:1px solid #8494b8;border-radius:2px"></div>
<div style="position:absolute;top:719.00px;font-family:'Liberation Sans',sans-serif;font-weight:normal;font-size:13.5px;line-height:13.5px;color:#000;white-space:nowrap;left:460px;">1 (1 / 1)</div>
<div style="position:absolute;left:558px;top:718px;width:12px;height:14px;border:1px solid #b8c8f0;background:linear-gradient(#e6ecfc,#c4d2f6)"></div>
<svg style="position:absolute;left:561px;top:723px;" width="7" height="4" viewBox="0 0 7 4"><path d="M0 0 H7 L3.5 4 Z" fill="#4d6185"/></svg>
<svg style="position:absolute;left:576.7px;top:717.2px;" width="15.6" height="15.6" viewBox="0 0 15.6 15.6"><circle cx="7.8" cy="7.8" r="6.8" fill="#aac2ee" stroke="#a0b8e8" stroke-width="1"/><path d="M7.8 12 L11.5 8 H9.3 V4 H6.3 V8 H4 Z" fill="#fff"/></svg>
<svg style="position:absolute;left:600.2px;top:717.2px;" width="15.6" height="15.6" viewBox="0 0 15.6 15.6"><circle cx="7.8" cy="7.8" r="6.8" fill="#aac2ee" stroke="#a0b8e8" stroke-width="1"/><path d="M4.5 10.6 H11" stroke="#fff" stroke-width="1.6"/><path d="M3.5 4.6 L7.8 8.8 L12 4.6 Z" fill="#fff"/></svg>
<svg style="position:absolute;left:622px;top:717px;" width="18" height="16" viewBox="0 0 18 16"><path d="M1 8 L8 1.5 V5 H17 V11 H8 V14.5 Z" fill="#aec4ee" stroke="#98b2e6" stroke-width="0.8"/></svg>
<svg style="position:absolute;left:647px;top:717px;" width="18" height="16" viewBox="0 0 18 16"><path d="M17 8 L10 1.5 V5 H1 V11 H10 V14.5 Z" fill="#aec4ee" stroke="#98b2e6" stroke-width="0.8"/></svg>
<div style="position:absolute;left:697px;top:713px;width:1px;height:20px;background:#9aa6cf"></div>
<div style="position:absolute;left:698px;top:713px;width:1px;height:20px;background:#f6f8fe"></div>
<div style="position:absolute;left:706px;top:715px;width:23px;height:19px;border:1px solid #aebde8;background:linear-gradient(#f2f5fd,#d6def8)"></div>
<svg style="position:absolute;left:710px;top:717px;" width="16" height="15" viewBox="0 0 16 15"><rect x="0.5" y="0.5" width="15" height="14" fill="#fff" stroke="#8a96b8"/><path d="M3 3.5 H13 M3 6 H13 M3 8.5 H13 M3 11 H13" stroke="#8a96b8"/></svg>
<svg style="position:absolute;left:735px;top:716px;" width="14" height="17" viewBox="0 0 14 17"><rect x="0.5" y="1" width="13" height="6" fill="#eef2fc" stroke="#a8b6dc"/><rect x="0.5" y="10" width="13" height="6" fill="#eef2fc" stroke="#a8b6dc"/></svg>
<svg style="position:absolute;left:758px;top:716px;" width="14" height="17" viewBox="0 0 14 17"><rect x="0.5" y="1" width="5.5" height="15" fill="#eef2fc" stroke="#a8b6dc"/><rect x="8" y="1" width="5.5" height="15" fill="#eef2fc" stroke="#a8b6dc"/></svg>
<svg style="position:absolute;left:783px;top:716px;" width="14" height="17" viewBox="0 0 14 17"><rect x="0.5" y="1" width="5" height="6" fill="#eef2fc" stroke="#a8b6dc"/><rect x="8.5" y="1" width="5" height="6" fill="#eef2fc" stroke="#a8b6dc"/><rect x="0.5" y="10" width="5" height="6" fill="#eef2fc" stroke="#a8b6dc"/><rect x="8.5" y="10" width="5" height="6" fill="#eef2fc" stroke="#a8b6dc"/></svg>
<div style="position:absolute;top:720.00px;font-family:'Liberation Sans',sans-serif;font-weight:normal;font-size:12.9px;line-height:12.9px;color:#111;white-space:nowrap;left:821px;">100%</div>
<svg style="position:absolute;left:880px;top:721px;" width="5" height="3" viewBox="0 0 5 3"><path d="M0 0 H5 L2.5 3 Z" fill="#4a5890"/></svg>
<svg style="position:absolute;left:889px;top:715px;" width="18" height="18" viewBox="0 0 18 18"><circle cx="9" cy="9" r="8" fill="#eef2fc" stroke="#5a6aa8" stroke-width="1"/><path d="M4.5 9 H13.5" stroke="#4a5890" stroke-width="2.2"/></svg>
<div style="position:absolute;left:912px;top:722px;width:90px;height:1px;background:#6a7ab8"></div>
<div style="position:absolute;left:912px;top:723px;width:90px;height:1px;background:#f4f6fd"></div>
<svg style="position:absolute;left:953px;top:716px;" width="10" height="14" viewBox="0 0 10 14"><path d="M0.5 0.5 H9.5 V9 L5 13.5 L0.5 9 Z" fill="#f2f5fd" stroke="#5a6aa8"/><path d="M5 3 V10" stroke="#5a6aa8"/></svg>
<svg style="position:absolute;left:1007px;top:715px;" width="18" height="18" viewBox="0 0 18 18"><circle cx="9" cy="9" r="8" fill="#eef2fc" stroke="#5a6aa8" stroke-width="1"/><path d="M4.5 9 H13.5 M9 4.5 V13.5" stroke="#4a5890" stroke-width="2.2"/></svg>
<div style="position:absolute;left:0;top:733px;width:1024px;height:35px;background:linear-gradient(#c8dcf8 0px,#c8dcf8 1px,#2a5cb8 1px,#2a5cb8 2px,#3a84e8 2px,#3a84e8 5px,#2a68d0 5px,#2a68d0 6px,#4a90f0 6px,#4a90f0 8px,#2a60dc 9px,#2458d8 20px,#2258d8 30px,#1a44a8 35px)"></div>
<div style="position:absolute;left:0;top:738px;width:96px;height:30px;border-radius:0 12px 12px 0;background:linear-gradient(#3c9a3c 0px,#5cb85c 3px,#3ca83c 8px,#32a032 20px,#2a8a2a 30px);box-shadow:inset -2px 0 3px #1e6a1e"></div>
<svg style="position:absolute;left:11px;top:744px;" width="21" height="19" viewBox="0 0 21 19"><path d="M3 2 Q6 0 10 2 L8.5 8.5 Q5 7 1.5 8.5 Z" fill="#e8582a"/>
<path d="M11 2 Q15 4 19.5 2 L18 9 Q14 10.5 10 8.5 Z" fill="#6cc030"/>
<path d="M1.3 9.5 Q5 8 8.3 9.5 L7 16 Q3.5 14.5 0 16 Z" fill="#3c8ee8"/>
<path d="M9.8 9.8 Q14 11.5 17.8 10 L16.5 17 Q12.5 18.5 8.5 16.5 Z" fill="#f8c828"/></svg>
<div style="position:absolute;top:746.00px;font-family:'Liberation Sans',sans-serif;font-weight:bold;font-size:17.6px;line-height:17.6px;color:#fff;white-space:nowrap;left:34.5px;font-style:italic;text-shadow:1px 1px 1px #1a4a1a;">start</div>
<div style="position:absolute;left:106px;top:744px;width:2px;height:2px;background:#183c9c"></div>
<div style="position:absolute;left:107px;top:745px;width:1px;height:1px;background:#5a8ee8"></div>
<div style="position:absolute;left:109px;top:747px;width:2px;height:2px;background:#183c9c"></div>
<div style="position:absolute;left:110px;top:748px;width:1px;height:1px;background:#5a8ee8"></div>
<div style="position:absolute;left:106px;top:750px;width:2px;height:2px;background:#183c9c"></div>
<div style="position:absolute;left:107px;top:751px;width:1px;height:1px;background:#5a8ee8"></div>
<div style="position:absolute;left:109px;top:753px;width:2px;height:2px;background:#183c9c"></div>
<div style="position:absolute;left:110px;top:754px;width:1px;height:1px;background:#5a8ee8"></div>
<div style="position:absolute;left:106px;top:756px;width:2px;height:2px;background:#183c9c"></div>
<div style="position:absolute;left:107px;top:757px;width:1px;height:1px;background:#5a8ee8"></div>
<div style="position:absolute;left:109px;top:759px;width:2px;height:2px;background:#183c9c"></div>
<div style="position:absolute;left:110px;top:760px;width:1px;height:1px;background:#5a8ee8"></div>
<div style="position:absolute;left:106px;top:762px;width:2px;height:2px;background:#183c9c"></div>
<div style="position:absolute;left:107px;top:763px;width:1px;height:1px;background:#5a8ee8"></div>
<div style="position:absolute;left:225px;top:744px;width:2px;height:2px;background:#183c9c"></div>
<div style="position:absolute;left:226px;top:745px;width:1px;height:1px;background:#5a8ee8"></div>
<div style="position:absolute;left:228px;top:747px;width:2px;height:2px;background:#183c9c"></div>
<div style="position:absolute;left:229px;top:748px;width:1px;height:1px;background:#5a8ee8"></div>
<div style="position:absolute;left:225px;top:750px;width:2px;height:2px;background:#183c9c"></div>
<div style="position:absolute;left:226px;top:751px;width:1px;height:1px;background:#5a8ee8"></div>
<div style="position:absolute;left:228px;top:753px;width:2px;height:2px;background:#183c9c"></div>
<div style="position:absolute;left:229px;top:754px;width:1px;height:1px;background:#5a8ee8"></div>
<div style="position:absolute;left:225px;top:756px;width:2px;height:2px;background:#183c9c"></div>
<div style="position:absolute;left:226px;top:757px;width:1px;height:1px;background:#5a8ee8"></div>
<div style="position:absolute;left:228px;top:759px;width:2px;height:2px;background:#183c9c"></div>
<div style="position:absolute;left:229px;top:760px;width:1px;height:1px;background:#5a8ee8"></div>
<div style="position:absolute;left:225px;top:762px;width:2px;height:2px;background:#183c9c"></div>
<div style="position:absolute;left:226px;top:763px;width:1px;height:1px;background:#5a8ee8"></div>
<svg style="position:absolute;left:118px;top:744px;" width="17" height="17" viewBox="0 0 17 17"><rect x="1" y="2" width="13" height="13" rx="3" fill="#f4f8fc" stroke="#6090d0"/><path d="M4.5 6 H11 V8.5 H6.5 M6.5 6 V13 H11" fill="none" stroke="#2a5ab0" stroke-width="1.6"/><path d="M12 2 L16 5 L13 7" fill="#e04040"/></svg>
<svg style="position:absolute;left:142px;top:744px;" width="16" height="16" viewBox="0 0 16 16"><rect x="0.5" y="0.5" width="15" height="15" rx="3" fill="#fce6a8" stroke="#d89838"/><circle cx="8.5" cy="8.5" r="5" fill="#fff4d0" stroke="#e0a030" stroke-width="1.3"/><path d="M6 8 L8.5 10.5 L11 7" fill="none" stroke="#c07820" stroke-width="1.2"/></svg>
<svg style="position:absolute;left:165px;top:745px;" width="16" height="16" viewBox="0 0 16 16"><g transform="scale(1.0)"><circle cx="8" cy="8" r="7.5" fill="#d8382c"/>
<path d="M8 8 L1.5 4.3 A7.5 7.5 0 0 0 6.5 15.4 Z" fill="#2e9a40"/>
<path d="M8 8 L6.5 15.4 A7.5 7.5 0 0 0 15.2 6 Z" fill="#f6c81a"/>
<circle cx="8" cy="8" r="3.4" fill="#fff"/><circle cx="8" cy="8" r="2.5" fill="#3a70d8"/></g></svg>
<svg style="position:absolute;left:187px;top:743px;" width="16" height="19" viewBox="0 0 16 19"><path d="M3 6 L2 1 L4 6 Z M7 6 L8 0.5 L9 6 Z M12 6 L14 1 L13 6 Z" fill="#d84848"/><path d="M2 6 L5 6 L4 18 Z" fill="#e8c040"/><path d="M6 6 L10 6 L8 18 Z" fill="#40a0e0"/><path d="M11 6 L14 6 L12 18 Z" fill="#60b040"/><path d="M2 8 H14 L12.5 18 H3.5 Z" fill="#a0b8e0" opacity="0.5" stroke="#5070b0" stroke-width="0.7"/></svg>
<div style="position:absolute;left:236px;top:742px;width:111px;height:23px;border-radius:3px;border:1px solid #2452c4;background:linear-gradient(#5b9bfc 0px,#3c82f4 3px,#3678ee 20px,#2e6ce0 23px);box-shadow:inset 1px 1px 0 rgba(255,255,255,0.25)"></div>
<div style="position:absolute;top:747.00px;font-family:'Liberation Sans',sans-serif;font-weight:normal;font-size:11.6px;line-height:11.6px;color:#fff;white-space:nowrap;left:265px;transform:scaleX(0.95);transform-origin:0 0;">GoldMine 6....</div>
<svg style="position:absolute;left:246px;top:745px;" width="16" height="16" viewBox="0 0 16 16"><rect x="1" y="4" width="14" height="11" fill="#d8a020" stroke="#222"/><rect x="4" y="1" width="8" height="4" fill="#e8c060" stroke="#222"/><path d="M5 8 H11 V12 H5 Z" fill="#3a2a10"/><path d="M6 9 L8 11 L10 9" stroke="#f0d060"/></svg>
<div style="position:absolute;left:349px;top:742px;width:111px;height:23px;border-radius:3px;border:1px solid #2452c4;background:linear-gradient(#5b9bfc 0px,#3c82f4 3px,#3678ee 20px,#2e6ce0 23px);box-shadow:inset 1px 1px 0 rgba(255,255,255,0.25)"></div>
<div style="position:absolute;top:747.00px;font-family:'Liberation Sans',sans-serif;font-weight:normal;font-size:11.6px;line-height:11.6px;color:#fff;white-space:nowrap;left:378px;"><b style="color:#c4c8d8">3</b> Google ...</div>
<svg style="position:absolute;left:359px;top:746px;" width="16" height="16" viewBox="0 0 16 16"><g transform="scale(1.0)"><circle cx="8" cy="8" r="7.5" fill="#d8382c"/>
<path d="M8 8 L1.5 4.3 A7.5 7.5 0 0 0 6.5 15.4 Z" fill="#2e9a40"/>
<path d="M8 8 L6.5 15.4 A7.5 7.5 0 0 0 15.2 6 Z" fill="#f6c81a"/>
<circle cx="8" cy="8" r="3.4" fill="#fff"/><circle cx="8" cy="8" r="2.5" fill="#3a70d8"/></g></svg>
<svg style="position:absolute;left:451px;top:752px;" width="7" height="4" viewBox="0 0 7 4"><path d="M0 0 H7 L3.5 4 Z" fill="#fff"/></svg>
<div style="position:absolute;left:462px;top:742px;width:112px;height:23px;border-radius:3px;border:1px solid #2452c4;background:linear-gradient(#5b9bfc 0px,#3c82f4 3px,#3678ee 20px,#2e6ce0 23px);box-shadow:inset 1px 1px 0 rgba(255,255,255,0.25)"></div>
<div style="position:absolute;top:747.00px;font-family:'Liberation Sans',sans-serif;font-weight:normal;font-size:11.6px;line-height:11.6px;color:#fff;white-space:nowrap;left:491px;transform:scaleX(0.94);transform-origin:0 0;">Sage Line 5...</div>
<svg style="position:absolute;left:472px;top:745px;" width="17" height="16" viewBox="0 0 17 16"><rect x="0.5" y="0.5" width="16" height="15" fill="#fff" stroke="#2a2a60"/><rect x="1" y="1" width="15" height="3" fill="#308040"/><rect x="1" y="5" width="15" height="5" fill="#1a2a60"/><path d="M3 7.5 H14" stroke="#fff" stroke-width="2"/><rect x="1" y="12" width="15" height="3" fill="#a01870"/></svg>
<div style="position:absolute;left:576px;top:742px;width:112px;height:23px;border-radius:3px;border:1px solid #2452c4;background:linear-gradient(#5b9bfc 0px,#3c82f4 3px,#3678ee 20px,#2e6ce0 23px);box-shadow:inset 1px 1px 0 rgba(255,255,255,0.25)"></div>
<div style="position:absolute;top:747.00px;font-family:'Liberation Sans',sans-serif;font-weight:normal;font-size:11.6px;line-height:11.6px;color:#fff;white-space:nowrap;left:605px;">Inbox - Micr...</div>
<svg style="position:absolute;left:586px;top:744px;" width="17" height="17" viewBox="0 0 17 17"><rect x="0.5" y="0.5" width="15" height="15" rx="3" fill="#fce2a0" stroke="#d08830"/><circle cx="9" cy="9" r="5.5" fill="#fff2cc" stroke="#e09828" stroke-width="1.5"/><path d="M6.5 8.5 L9 11 L11.5 7.5" fill="none" stroke="#c07820" stroke-width="1.3"/></svg>
<div style="position:absolute;left:691px;top:742px;width:112px;height:23px;border-radius:3px;border:1px solid #143c9c;background:linear-gradient(#1a48b4,#1e50c0 3px,#1e4fbe);box-shadow:inset 1px 1px 0 rgba(255,255,255,0.25)"></div>
<div style="position:absolute;top:747.00px;font-family:'Liberation Sans',sans-serif;font-weight:normal;font-size:11.6px;line-height:11.6px;color:#fff;white-space:nowrap;left:720px;">S - Message...</div>
<svg style="position:absolute;left:701px;top:747px;" width="17" height="13" viewBox="0 0 17 13"><rect x="0.5" y="0.5" width="16" height="12" fill="#f8d870" stroke="#c09030"/><path d="M0.5 0.5 L8.5 7 L16.5 0.5" fill="none" stroke="#c09030"/></svg>
<div style="position:absolute;left:805px;top:742px;width:112px;height:23px;border-radius:3px;border:1px solid #2452c4;background:linear-gradient(#5b9bfc 0px,#3c82f4 3px,#3678ee 20px,#2e6ce0 23px);box-shadow:inset 1px 1px 0 rgba(255,255,255,0.25)"></div>
<div style="position:absolute;top:747.00px;font-family:'Liberation Sans',sans-serif;font-weight:normal;font-size:11.6px;line-height:11.6px;color:#fff;white-space:nowrap;left:834px;">S (3).pdf - ...</div>
<svg style="position:absolute;left:815px;top:745px;" width="16" height="16" viewBox="0 0 16 16"><rect x="0.5" y="0.5" width="15" height="15" rx="1.5" fill="#eef0f2" stroke="#2f5a7a"/>
<path d="M1 1 H15 V3 L9 4 L6 7 L1 9 Z" fill="#bfe0f0"/>
<path d="M2 14 C4 11 7 12 8 9 C9 6 12 6 15 3 L15 6 C13 8 11 9 10 11 C9 13 6 14 3 15 Z" fill="#f08428"/></svg>
<div style="position:absolute;left:930px;top:738px;width:94px;height:30px;border-left:1px solid #1a3a90;background:linear-gradient(#1aa0f0 0px,#1296ec 4px,#0f92ea 24px,#0a7ad8 30px)"></div>
<svg style="position:absolute;left:922px;top:744px;" width="18" height="18" viewBox="0 0 18 18"><defs><linearGradient id="chv" x1="0" y1="0" x2="1" y2="1"><stop offset="0" stop-color="#70c0fa"/><stop offset="0.5" stop-color="#2a88e8"/><stop offset="1" stop-color="#1058c8"/></linearGradient></defs><circle cx="9" cy="9" r="8.3" fill="url(#chv)" stroke="#1a4898" stroke-width="0.8"/><path d="M3 14 A8 8 0 0 0 16 12" fill="none" stroke="#b8e0ff" stroke-width="0.8"/><path d="M10.8 5 L6.5 9 L10.8 13" fill="none" stroke="#fff" stroke-width="2.4"/></svg>
<svg style="position:absolute;left:942px;top:744px;" width="17" height="17" viewBox="0 0 17 17"><rect x="3" y="1" width="13" height="9" fill="#f8f0e0" stroke="#906030"/><rect x="0.5" y="7" width="13" height="9" fill="#fff" stroke="#906030"/><path d="M2.5 10 H11 M2.5 12.5 H9" stroke="#6070a0"/><rect x="11" y="2.5" width="3" height="3" fill="#d04030"/></svg>
<svg style="position:absolute;left:959px;top:744px;" width="18" height="18" viewBox="0 0 18 18"><defs><radialGradient id="grn" cx="0.5" cy="0.3" r="0.7"><stop offset="0" stop-color="#a8f080"/><stop offset="0.6" stop-color="#50d030"/><stop offset="1" stop-color="#30a018"/></radialGradient></defs><circle cx="8.6" cy="8.6" r="7.6" fill="url(#grn)" stroke="#1c6a14" stroke-width="0.8"/></svg>
<div style="position:absolute;top:748.00px;font-family:'Liberation Sans',sans-serif;font-weight:normal;font-size:11.2px;line-height:11.2px;color:#fff;white-space:nowrap;left:983px;">16:43</div>
</body></html>
